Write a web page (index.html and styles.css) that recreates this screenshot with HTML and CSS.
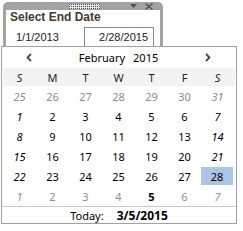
FILE: index.html
```html
<!DOCTYPE html>
<html lang="en">
<head>
    <meta charset="UTF-8">
    <title>Select End Date</title>
    <link rel="stylesheet" href="styles.css">
</head>
<body>
    <!-- Floating picker window -->
    <div class="picker">
        <div class="titlebar">
            <svg class="grip" width="31" height="5" viewBox="0 0 31 5">
                <defs>
                    <pattern id="dots" width="2" height="2" patternUnits="userSpaceOnUse">
                        <rect width="2" height="2" fill="#e8e8e8"/>
                        <rect width="1" height="1" fill="#4a4a4a"/>
                    </pattern>
                </defs>
                <rect width="31" height="5" fill="url(#dots)"/>
            </svg>
            <svg class="menu-icon" width="7" height="4" viewBox="0 0 7 4">
                <path d="M0 0 H7 L3.5 4 Z" fill="#505050"/>
            </svg>
            <svg class="close-icon" width="8" height="7" viewBox="0 0 8 7">
                <path d="M0.5 0.5 L7.5 6.5 M7.5 0.5 L0.5 6.5" stroke="#505050" stroke-width="1.4"/>
            </svg>
        </div>
        <div class="picker-body">
            <div class="picker-title">Select End Date</div>
            <div class="range">
                <span class="range-start">1/1/2013</span>
                <span class="range-end">2/28/2015</span>
            </div>
        </div>
    </div>

    <!-- Calendar dropdown -->
    <div class="calendar">
        <div class="cal-head">
            <svg class="nav" width="6" height="9" viewBox="0 0 6 9">
                <path d="M5 1 L1.5 4.5 L5 8" fill="none" stroke="#4a4a4a" stroke-width="1.8"/>
            </svg>
            <span class="cal-month">February<span class="cal-year">2015</span></span>
            <svg class="nav" width="6" height="9" viewBox="0 0 6 9">
                <path d="M1 1 L4.5 4.5 L1 8" fill="none" stroke="#4a4a4a" stroke-width="1.8"/>
            </svg>
        </div>

        <div class="cal-dow">
            <span class="weekend">S</span>
            <span>M</span>
            <span>T</span>
            <span>W</span>
            <span>T</span>
            <span>F</span>
            <span class="weekend">S</span>
        </div>

        <div class="cal-days">
            <span class="muted weekend">25</span>
            <span class="muted">26</span>
            <span class="muted">27</span>
            <span class="muted">28</span>
            <span class="muted">29</span>
            <span class="muted">30</span>
            <span class="muted weekend">31</span>

            <span class="weekend">1</span>
            <span>2</span>
            <span>3</span>
            <span>4</span>
            <span>5</span>
            <span>6</span>
            <span class="weekend">7</span>

            <span class="weekend">8</span>
            <span>9</span>
            <span>10</span>
            <span>11</span>
            <span>12</span>
            <span>13</span>
            <span class="weekend">14</span>

            <span class="weekend">15</span>
            <span>16</span>
            <span>17</span>
            <span>18</span>
            <span>19</span>
            <span>20</span>
            <span class="weekend">21</span>

            <span class="weekend">22</span>
            <span>23</span>
            <span>24</span>
            <span>25</span>
            <span>26</span>
            <span>27</span>
            <span class="selected">28</span>

            <span class="muted weekend">1</span>
            <span class="muted">2</span>
            <span class="muted">3</span>
            <span class="muted">4</span>
            <span class="today">5</span>
            <span class="muted">6</span>
            <span class="muted weekend">7</span>
        </div>

        <div class="cal-foot">
            <span>Today:</span>
            <span class="today-value">3/5/2015</span>
        </div>
    </div>
</body>
</html>
```

FILE: styles.css
```css
:root {
    --frame-color: #a3a3a3;
    --border-color: #a0a0a0;
    --muted-color: #8c8c8c;
    --select-color: #abc5e7;
    --dow-bg: #f3f3f3;
}

body {
    margin: 0;
    width: 243px;
    height: 231px;
    overflow: hidden;
    position: relative;
    background: white;
    color: #000;
}

/* Picker window */
.picker {
    margin: 2px 0 0 3px;
    width: 160px;
    box-sizing: border-box;
    padding: 0 3px;
    background: var(--frame-color);
    border-radius: 5px 5px 0 0;
}

.titlebar {
    height: 8px;
    display: flex;
    align-items: center;
}

.grip {
    margin-left: 63px;
}

.menu-icon {
    margin-left: 30px;
}

.close-icon {
    margin-left: 8px;
}

.picker-body {
    height: 50px;
    padding-left: 4px;
    background: white;
    font-family: "Liberation Sans", Arial, sans-serif;
}

.picker-title {
    font-size: 12px;
    line-height: 14px;
    font-weight: bold;
    color: #45392f;
}

.range {
    display: flex;
    align-items: center;
    margin-top: 3px;
    font-size: 11px;
    color: #222;
}

.range-start {
    margin-left: 6px;
    width: 68px;
}

.range-end {
    width: 70px;
    height: 20px;
    line-height: 18px;
    box-sizing: border-box;
    border: 1px solid #8a8a8a;
    padding-right: 5px;
    text-align: right;
}

/* Calendar dropdown */
.calendar {
    position: absolute;
    left: 1px;
    top: 46px;
    width: 236px;
    height: 178px;
    box-sizing: border-box;
    border: 1px solid var(--border-color);
    background: white;
    font-family: "Noto Sans", "Open Sans", sans-serif;
    font-size: 11px;
}

.cal-head {
    height: 21px;
    display: flex;
    align-items: center;
    justify-content: space-between;
    padding: 0 25px 0 24px;
}

.cal-year {
    margin-left: 8px;
}

.cal-dow,
.cal-days {
    display: grid;
    grid-template-columns: repeat(7, 33px);
    margin: 0 1px;
}

.cal-dow {
    height: 18px;
    align-items: center;
    background: var(--dow-bg);
    color: #1e1e2e;
}

.cal-days {
    grid-auto-rows: 20px;
}

.cal-dow span,
.cal-days span {
    display: flex;
    align-items: center;
    justify-content: center;
}

.weekend {
    font-style: italic;
}

.muted {
    color: var(--muted-color);
}

.today {
    font-weight: bold;
}

.selected {
    margin: 1px 1px 1px 0;
    background: var(--select-color);
}

.cal-foot {
    height: 16px;
    border-top: 1px solid #c8c8c8;
    display: flex;
    align-items: center;
    justify-content: center;
    gap: 13px;
}

.today-value {
    font-size: 12px;
    font-weight: bold;
}
```
